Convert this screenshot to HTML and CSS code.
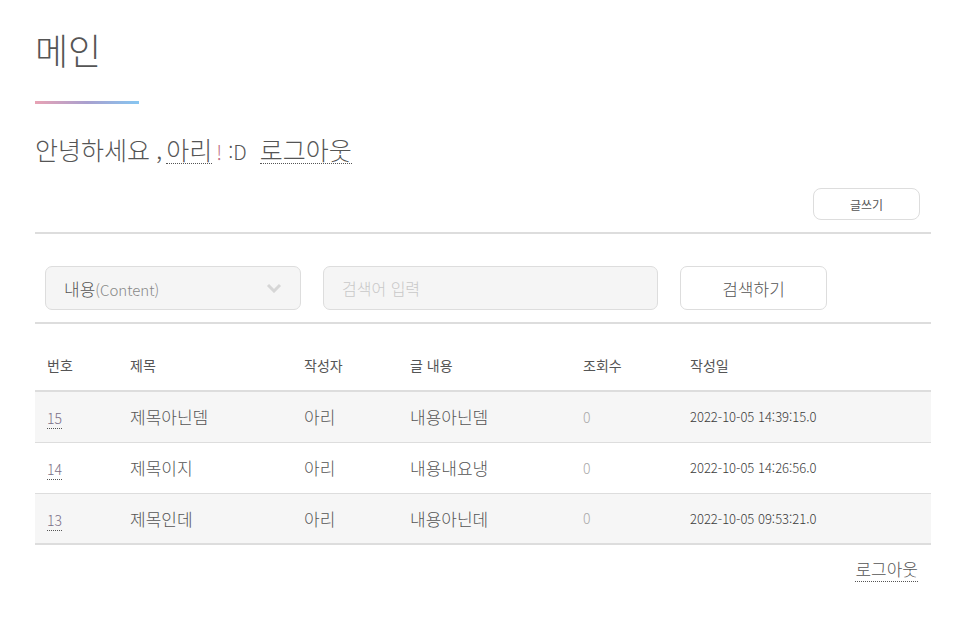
FILE: index.html
```html
<!DOCTYPE html>
<html lang="ko">
<head>
<meta charset="utf-8">
<title>메인</title>
<link rel="stylesheet" href="styles.css">
</head>
<body>
<div class="page">
  <h1 class="title">메인</h1>
  <div class="title-bar"></div>
  <p class="greeting">안녕하세요<span class="comma">,</span><a class="dotted" href="#">아리</a><span class="bang">!</span><span class="smile">:D</span><a class="dotted logout-top" href="#">로그아웃</a></p>
  <div class="write-row"><button class="btn-write">글쓰기</button></div>
  <form class="search">
    <div class="select">
      <span class="select-label">내용<span class="select-sub">(Content)</span></span>
      <svg class="chev" width="16" height="10" viewBox="0 0 16 10"><path d="M2 2 L8 8 L14 2" fill="none" stroke="#d6d6d6" stroke-width="3"/></svg>
    </div>
    <div class="input">검색어 입력</div>
    <button type="button" class="btn-search">검색하기</button>
  </form>
  <table class="board">
    <thead>
      <tr><th class="c-no">번호</th><th class="c-title">제목</th><th class="c-writer">작성자</th><th class="c-content">글 내용</th><th class="c-views">조회수</th><th class="c-date">작성일</th></tr>
    </thead>
    <tbody>
      <tr class="odd"><td><a class="num" href="#">15</a></td><td>제목아닌뎀</td><td>아리</td><td>내용아닌뎀</td><td class="views">0</td><td class="date">2022-10-05 14:39:15.0</td></tr>
      <tr><td><a class="num" href="#">14</a></td><td>제목이지</td><td>아리</td><td>내용내요냉</td><td class="views">0</td><td class="date">2022-10-05 14:26:56.0</td></tr>
      <tr class="odd"><td><a class="num" href="#">13</a></td><td>제목인데</td><td>아리</td><td>내용아닌데</td><td class="views">0</td><td class="date">2022-10-05 09:53:21.0</td></tr>
    </tbody>
  </table>
  <div class="bottom"><a class="dotted logout-bottom" href="#">로그아웃</a></div>
</div>
</body>
</html>
```
FILE: styles.css
```css
* { box-sizing: border-box; }
body {
  margin: 0;
  font-family: "Noto Sans CJK KR", "Noto Sans", sans-serif;
  font-weight: 300;
  color: #555;
  background: #fff;
}
.page {
  padding: 25px 24px 0 35px;
}
.title {
  margin: 0;
  font-size: 36px;
  font-weight: 300;
  line-height: 48px;
  color: #555;
}
.title-bar {
  width: 104px;
  height: 3px;
  margin-top: 28px;
  background: linear-gradient(to right, #e8a2b4, #a9a0cf, #86c6f1);
}
.greeting {
  margin: 27px 0 0;
  font-size: 25px;
  line-height: 36px;
  color: #555;
  display: flex;
  align-items: baseline;
}
.dotted {
  color: #555;
  text-decoration: none;
  border-bottom: 1px dotted #555;
  line-height: 28px;
}
.comma { margin: 0 4px 0 6px; }
.bang { color: #c07084; font-size: 20px; margin: 0 6px 0 4px; }
.smile { font-size: 20px; margin-right: 13px; }
.write-row {
  display: flex;
  justify-content: flex-end;
  margin-top: 18px;
  padding-right: 11px;
}
.btn-write {
  width: 107px;
  height: 32px;
  border: 1px solid #ddd;
  border-radius: 8px;
  background: #fff;
  font-family: inherit;
  font-weight: 400;
  font-size: 12px;
  color: #555;
}
.search {
  margin: 12px 0 0;
  border-top: 2px solid #ddd;
  border-bottom: 2px solid #ddd;
  padding: 32px 10px 12px;
  display: flex;
  gap: 22px;
}
.select, .input {
  height: 44px;
  border: 1px solid #ddd;
  border-radius: 7px;
  background: #f5f5f5;
  display: flex;
  align-items: center;
}
.select {
  width: 256px;
  padding: 0 18px 0 18px;
  justify-content: space-between;
  font-size: 17px;
  color: #555;
}
.select-sub { font-size: 15px; color: #888; }
.input {
  width: 335px;
  padding: 0 18px;
  font-size: 16px;
  color: #c8c8c8;
}
.btn-search {
  width: 147px;
  height: 44px;
  border: 1px solid #ddd;
  border-radius: 7px;
  background: #fff;
  font-family: inherit;
  font-weight: 300;
  font-size: 17px;
  color: #555;
}
.board {
  width: 100%;
  border-collapse: collapse;
  margin-top: 0;
}
.board th {
  text-align: left;
  font-weight: 400;
  font-size: 14px;
  color: #555;
  height: 67px;
  padding: 16px 0 0 12px;
  border-bottom: 2px solid #ddd;
}
.board td {
  height: 51px;
  padding: 0 0 0 12px;
  font-size: 17px;
  color: #555;
  border-bottom: 1px solid #ddd;
}
.board tbody tr:last-child td { border-bottom: 2px solid #ddd; }
.board tr.odd td { background: #f6f6f6; }
.c-no { width: 83px; }
.c-title { width: 174px; }
.c-writer { width: 106px; }
.c-content { width: 173px; }
.c-views { width: 107px; }
.num {
  font-size: 14px;
  color: #7a6f86;
  text-decoration: none;
  border-bottom: 1px dotted #555;
}
.board td.views { color: #aaa; font-size: 14px; }
.board td.date { font-size: 13px; font-weight: 300; color: #3a3a3a; }
.bottom {
  display: flex;
  justify-content: flex-end;
  padding: 12px 13px 0 0;
}
.logout-bottom { font-size: 17px; line-height: 24px; }
```
